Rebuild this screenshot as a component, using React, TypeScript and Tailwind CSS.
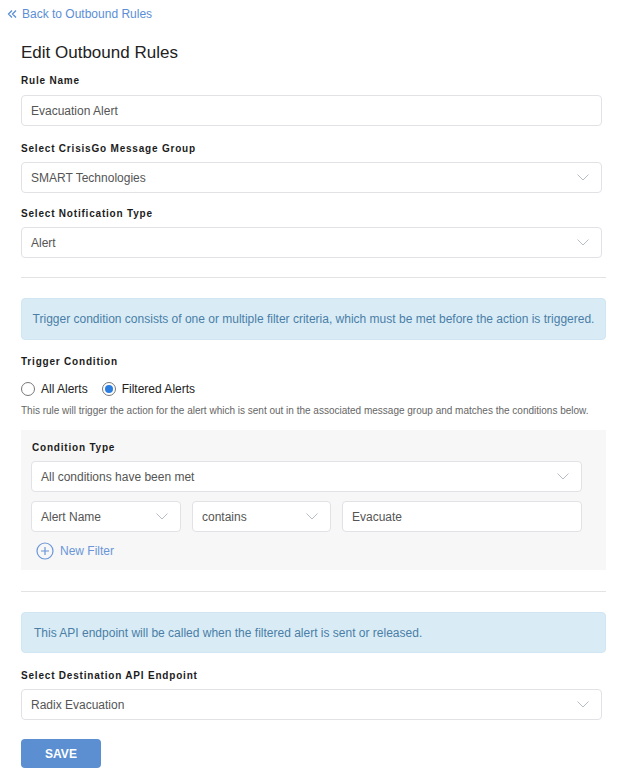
const font = { fontFamily: '"Liberation Sans", Arial, sans-serif' };

function Label({ children, className = "" }: { children: React.ReactNode; className?: string }) {
  return (
    <div className={`h-[12px] text-[10px] leading-[12px] font-bold tracking-[0.8px] text-[#1c1c1c] ${className}`}>
      {children}
    </div>
  );
}

function Chevron() {
  return (
    <svg width="12" height="7" viewBox="0 0 12 7" fill="none" stroke="#b8bcc6" strokeWidth="1">
      <path d="M0.5 0.5 6 6 11.5 0.5" />
    </svg>
  );
}

function Field({ value, select, className = "" }: { value: string; select?: boolean; className?: string }) {
  return (
    <div
      className={`flex items-center justify-between h-[31px] pl-[9px] pr-[12px] bg-white border border-[#e2e2e6] rounded-[4px] text-[12px] text-[#555] ${className}`}
    >
      <span>{value}</span>
      {select && <Chevron />}
    </div>
  );
}

function Radio({ checked, label }: { checked?: boolean; label: string }) {
  return (
    <label className="flex items-center gap-[6px] text-[12px] text-[#222]">
      <span className="flex items-center justify-center w-[14px] h-[14px] rounded-full border border-[#777] bg-white">
        {checked && <span className="w-[8px] h-[8px] rounded-full bg-[#2b7de0]" />}
      </span>
      {label}
    </label>
  );
}

export default function App() {
  return (
    <div className="bg-white min-h-[784px]" style={font}>
      <div className="pt-[7px] pl-[7px] h-[21px] flex items-center gap-[5px] text-[12px] leading-[14px] text-[#5b8ed6]">
        <svg width="10" height="10" viewBox="0 0 10 10" fill="none" stroke="#5b8ed6" strokeWidth="1.3">
          <path d="M5 1.5 1.5 5 5 8.5M9 1.5 5.5 5 9 8.5" />
        </svg>
        <span>Back to Outbound Rules</span>
      </div>

      <div className="pl-[21px] pr-[27px]">
        <h1 className="mt-[22px] h-[20px] text-[17px] leading-[20px] text-[#222]">Edit Outbound Rules</h1>

        <Label className="mt-[12px]">Rule Name</Label>
        <Field value="Evacuation Alert" className="mt-[8px] mr-[4px]" />

        <Label className="mt-[17px]">Select CrisisGo Message Group</Label>
        <Field value="SMART Technologies" select className="mt-[7px] mr-[4px]" />

        <Label className="mt-[15px]">Select Notification Type</Label>
        <Field value="Alert" select className="mt-[7px] mr-[4px]" />

        <div className="mt-[19px] h-px bg-[#e3e3e3]" />

        <div className="mt-[20px] h-[42px] flex items-center justify-center rounded-[4px] bg-[#d9ecf6] border border-[#d0e6f2] text-[12px] text-[#4a7ea6]">
          Trigger condition consists of one or multiple filter criteria, which must be met before the action is triggered.
        </div>

        <Label className="mt-[16px]">Trigger Condition</Label>
        <div className="mt-[13px] h-[16px] flex items-center gap-[14px]">
          <Radio label="All Alerts" />
          <Radio checked label="Filtered Alerts" />
        </div>
        <div className="mt-[8px] h-[12px] text-[10px] leading-[12px] text-[#666]">
          This rule will trigger the action for the alert which is sent out in the associated message group and matches the conditions below.
        </div>

        <div className="mt-[13px] h-[140px] bg-[#f7f7f7] pl-[10px] pr-[24px] pt-[12px]">
          <Label className="pl-[1px]">Condition Type</Label>
          <Field value="All conditions have been met" select className="mt-[7px] h-[30px]" />
          <div className="mt-[9px] flex gap-[11px]">
            <Field value="Alert Name" select className="w-[150px]" />
            <Field value="contains" select className="w-[139px]" />
            <Field value="Evacuate" className="flex-1" />
          </div>
          <div className="mt-[10px] ml-[5px] flex items-center gap-[6px] text-[12px] text-[#6a96d8]">
            <svg width="18" height="18" viewBox="0 0 18 18" fill="none" stroke="#6a96d8" strokeWidth="1.2">
              <circle cx="9" cy="9" r="8" />
              <path d="M9 5v8M5 9h8" />
            </svg>
            <span>New Filter</span>
          </div>
        </div>

        <div className="mt-[21px] h-px bg-[#e3e3e3]" />

        <div className="mt-[20px] h-[41px] flex items-center pl-[12px] rounded-[4px] bg-[#d9ecf6] border border-[#d0e6f2] text-[12px] text-[#4a7ea6]">
          This API endpoint will be called when the filtered alert is sent or released.
        </div>

        <Label className="mt-[17px]">Select Destination API Endpoint</Label>
        <Field value="Radix Evacuation" select className="mt-[7px] mr-[4px]" />

        <button className="mt-[19px] w-[80px] h-[29px] rounded-[4px] bg-[#5b8fd1] text-white text-[12px] font-bold">
          SAVE
        </button>
      </div>
    </div>
  );
}
